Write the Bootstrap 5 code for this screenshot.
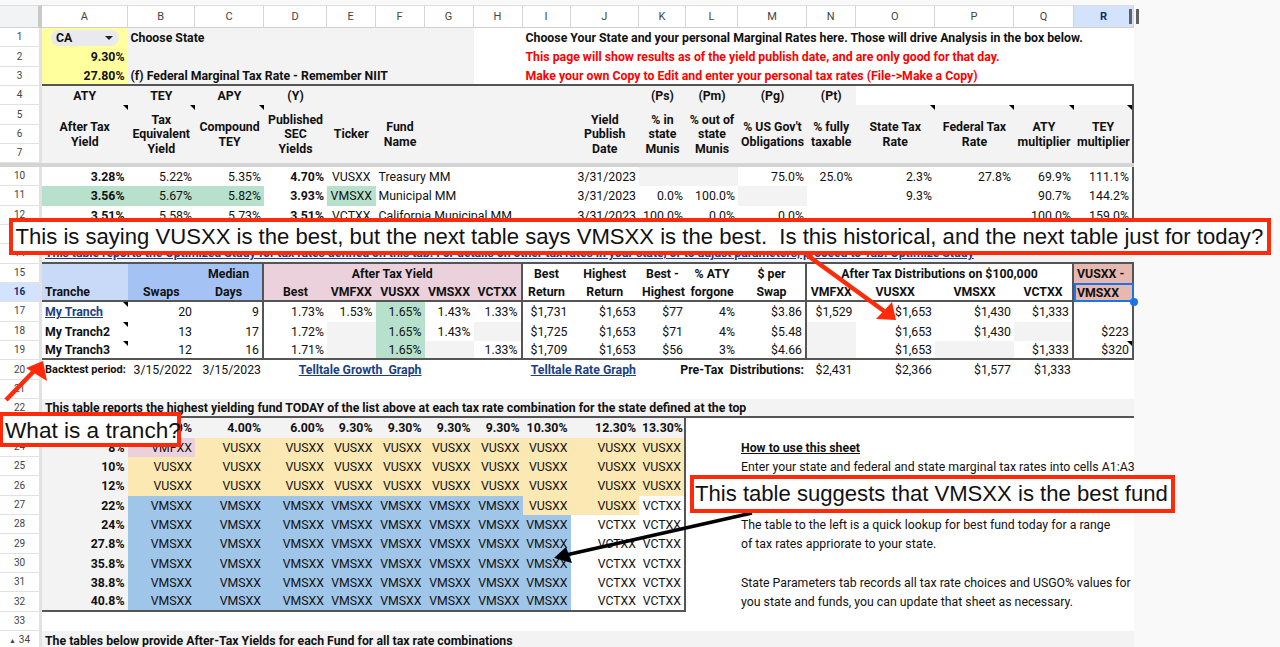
<!DOCTYPE html>
<html lang="en">
<head>
<meta charset="utf-8">
<title>Tax yield sheet</title>
<link href="https://cdn.jsdelivr.net/npm/bootstrap@5.3.0/dist/css/bootstrap.min.css" rel="stylesheet">
<style>
html,body{height:100%;overflow:hidden}
body{background:#f8f9f8;font-family:Roboto,"Liberation Sans",sans-serif;color:#111}
.stage{position:relative;width:1280px;height:647px;overflow:hidden;padding-top:5px}
.sheet{table-layout:fixed;width:1134px;border-collapse:separate;border-spacing:0;font-size:12.3px;line-height:14px;--bs-table-bg:#fff;--bs-table-color:#111}
.sheet>tbody>tr{height:19.35px}
.sheet>tbody>tr>td{padding:.5px 3px 0;white-space:nowrap;overflow:visible;position:relative}
.sheet>tbody>tr.headrow{height:23px}
.sheet>tbody>tr.freeze{height:3.5px}
.sheet>tbody>tr.freeze>td{padding:0;background:#d4d4d4;line-height:0;font-size:0}
.sheet td.rh{background:#fff;color:#444;font-size:10px;text-align:center;padding:0;border-right:3px solid #e2e2e2;border-bottom:1px solid #e2e2e2}
.sheet td.rh-on{background:#d3e3fd;color:#0b2f70;font-weight:700}
.sheet td.ch{color:#444;font-size:11px;text-align:center;border-right:1px solid #d6d6d6;border-bottom:1px solid #d0d0d0;border-top:1px solid #dedede}
.sheet td.corner{background:#f1f3f4;border-right:4px solid #c9c9c9;border-bottom:1px solid #d0d0d0;border-top:1px solid #dedede}
.sheet td.ch-on{background:#d3e3fd;color:#0b2f70;font-weight:700}
.sheet td.c-gray{background:#f3f3f3}
.sheet td.c-yel{background:#ffff9e}
.sheet td.c-grn{background:#b7e1cd}
.sheet td.c-pch{background:#fce8b2}
.sheet td.c-blu{background:#9fc5e8}
.sheet td.c-pnk{background:#ead1dc}
.sheet td.c-lbl{background:#c9daf8}
.sheet td.c-mbl{background:#a4c2f4}
.sheet td.c-sal{background:#e6b8af}
.sheet td.t-red{color:#f00}
.sheet td.k-r{border-right:2px solid #555}
.sheet td.k-b{border-bottom:2px solid #555}
.sheet td.picked{outline:2px solid #1a73e8;outline-offset:-2px}
.sheet td.picked::after{content:"";position:absolute;right:-4px;bottom:-4px;width:8px;height:8px;border-radius:50%;background:#1a73e8;z-index:2}
.sheet td.tri::before{content:"";position:absolute;top:0;right:0;border-style:solid;border-width:0 5px 5px 0;border-color:transparent #000 transparent transparent}
.lh3{line-height:14.7px}
.small-b{font-size:11px}
.lnk{color:#1c3f85;font-weight:700;text-decoration:underline}
.lnk-long{letter-spacing:-.06px}
.chip{background:#e8eaed;width:68px;height:16px;margin-left:6px;padding:0 6px 0 5px;font-weight:700}
.caret-d{width:0;height:0;border-left:4px solid transparent;border-right:4px solid transparent;border-top:4px solid #222}
.grip{position:absolute;top:3px;width:3px;height:15px;background:#5f6368}
.grip-a{left:55px}
.grip-b{left:62px}
.ovl{position:absolute;left:0;top:0;width:1280px;height:647px;pointer-events:none}
.note{position:absolute;background:#fff;border:4px solid #ff2a0a;font-family:"Liberation Sans",Arial,sans-serif;line-height:1;color:#111;white-space:nowrap}
.note-a{left:9px;top:218px;width:1262px;height:37px;font-size:22.1px;padding-left:2.5px;padding-top:1px}
.note-b{left:-1px;top:412px;width:182px;height:35px;font-size:22.6px;padding-left:2px;padding-top:3px}
.note-c{left:690px;top:475px;width:485px;height:38px;font-size:22.1px;padding-left:1px}
.tick{font-size:7px;color:#444;margin-right:3px}
</style>
</head>
<body>
<div class="stage">
<table class="table table-borderless align-middle mb-0 sheet">
<colgroup>
<col style="width:42px"><col style="width:85.5px"><col style="width:67.5px"><col style="width:69px"><col style="width:63px"><col style="width:48.5px"><col style="width:49px"><col style="width:49px"><col style="width:49px"><col style="width:48px"><col style="width:68.5px"><col style="width:47px"><col style="width:52px"><col style="width:69px"><col style="width:48.5px"><col style="width:79.5px"><col style="width:79px"><col style="width:60px"><col style="width:60px">
</colgroup>
<tbody>
<tr class="headrow"><td class="corner"></td><td class="ch">A</td><td class="ch">B</td><td class="ch">C</td><td class="ch">D</td><td class="ch">E</td><td class="ch">F</td><td class="ch">G</td><td class="ch">H</td><td class="ch">I</td><td class="ch">J</td><td class="ch">K</td><td class="ch">L</td><td class="ch">M</td><td class="ch">N</td><td class="ch">O</td><td class="ch">P</td><td class="ch">Q</td><td class="ch ch-on">R<span class="grip grip-a"></span><span class="grip grip-b"></span></td></tr>

<tr><td class="rh">1</td><td class="c-yel"><div class="chip rounded-pill d-flex align-items-center justify-content-between"><span>CA</span><span class="caret-d"></span></div></td><td class="c-gray fw-bold" colspan="6">Choose State</td><td></td><td class="fw-bold" colspan="10">Choose Your State and your personal Marginal Rates here. Those will drive Analysis in the box below.</td></tr>
<tr><td class="rh">2</td><td class="c-yel fw-bold text-end">9.30%</td><td class="c-gray" colspan="6"></td><td></td><td class="fw-bold t-red" colspan="10">This page will show results as of the yield publish date, and are only good for that day.</td></tr>
<tr><td class="rh">3</td><td class="c-yel fw-bold text-end k-b">27.80%</td><td class="c-gray fw-bold k-b" colspan="6">(f) Federal Marginal Tax Rate - Remember NIIT</td><td class="k-b"></td><td class="fw-bold t-red k-b" colspan="10">Make your own Copy to Edit and enter your personal tax rates (File-&gt;Make a Copy)</td></tr>

<tr><td class="rh">4</td><td class="c-gray fw-bold text-center">ATY</td><td class="c-gray fw-bold text-center">TEY</td><td class="c-gray fw-bold text-center">APY</td><td class="c-gray fw-bold text-center">(Y)</td><td class="c-gray"></td><td class="c-gray"></td><td class="c-gray"></td><td class="c-gray"></td><td class="c-gray"></td><td class="c-gray"></td><td class="c-gray fw-bold text-center">(Ps)</td><td class="c-gray fw-bold text-center">(Pm)</td><td class="c-gray fw-bold text-center">(Pg)</td><td class="c-gray fw-bold text-center">(Pt)</td><td></td><td></td><td></td><td class="k-r"></td></tr>
<tr><td class="rh">5</td>
<td rowspan="3" class="c-gray fw-bold text-center lh3 tri">After Tax<br>Yield</td>
<td rowspan="3" class="c-gray fw-bold text-center lh3 tri">Tax<br>Equivalent<br>Yield</td>
<td rowspan="3" class="c-gray fw-bold text-center lh3 tri">Compound<br>TEY</td>
<td rowspan="3" class="c-gray fw-bold text-center lh3">Published<br>SEC<br>Yields</td>
<td rowspan="3" class="c-gray fw-bold text-center lh3">Ticker</td>
<td rowspan="3" class="c-gray fw-bold text-center lh3">Fund<br>Name</td>
<td rowspan="3" class="c-gray"></td><td rowspan="3" class="c-gray"></td><td rowspan="3" class="c-gray"></td>
<td rowspan="3" class="c-gray fw-bold text-center lh3">Yield<br>Publish<br>Date</td>
<td rowspan="3" class="c-gray fw-bold text-center lh3">% in<br>state<br>Munis</td>
<td rowspan="3" class="c-gray fw-bold text-center lh3">% out of<br>state<br>Munis</td>
<td rowspan="3" class="c-gray fw-bold text-center lh3">% US Gov't<br>Obligations</td>
<td rowspan="3" class="c-gray fw-bold text-center lh3">% fully<br>taxable</td>
<td rowspan="3" class="c-gray fw-bold text-center lh3 tri">State Tax<br>Rate</td>
<td rowspan="3" class="c-gray fw-bold text-center lh3 tri">Federal Tax<br>Rate</td>
<td rowspan="3" class="c-gray fw-bold text-center lh3 tri">ATY<br>multiplier</td>
<td rowspan="3" class="c-gray fw-bold text-center lh3 tri k-r">TEY<br>multiplier</td>
</tr>
<tr><td class="rh">6</td></tr>
<tr><td class="rh">7</td></tr>
<tr class="freeze"><td colspan="19"></td></tr>

<tr><td class="rh">10</td><td class="fw-bold text-end">3.28%</td><td class="text-end">5.22%</td><td class="text-end">5.35%</td><td class="fw-bold text-end">4.70%</td><td class="text-center">VUSXX</td><td colspan="4">Treasury MM</td><td class="text-end">3/31/2023</td><td class="c-gray"></td><td class="c-gray"></td><td class="text-end">75.0%</td><td class="text-end">25.0%</td><td class="text-end">2.3%</td><td class="text-end">27.8%</td><td class="text-end">69.9%</td><td class="text-end k-r">111.1%</td></tr>
<tr><td class="rh">11</td><td class="c-grn fw-bold text-end">3.56%</td><td class="c-grn text-end">5.67%</td><td class="c-grn text-end">5.82%</td><td class="fw-bold text-end">3.93%</td><td class="c-grn text-center">VMSXX</td><td colspan="4">Municipal MM</td><td class="text-end">3/31/2023</td><td class="text-end">0.0%</td><td class="text-end">100.0%</td><td class="c-gray"></td><td></td><td class="text-end">9.3%</td><td></td><td class="text-end">90.7%</td><td class="text-end k-r">144.2%</td></tr>
<tr><td class="rh">12</td><td class="fw-bold text-end">3.51%</td><td class="text-end">5.58%</td><td class="text-end">5.73%</td><td class="fw-bold text-end">3.51%</td><td class="text-center">VCTXX</td><td colspan="4">California Municipal MM</td><td class="text-end">3/31/2023</td><td class="text-end">100.0%</td><td class="text-end">0.0%</td><td class="text-end">0.0%</td><td></td><td></td><td></td><td class="text-end">100.0%</td><td class="text-end k-r">159.0%</td></tr>
<tr><td class="rh">13</td><td colspan="18"></td></tr>
<tr><td class="rh">14</td><td class="c-gray k-b" colspan="18"><span class="lnk lnk-long">This table reports the Optimized Study for tax rates defined on this tab. For details on other tax rates in your state, or to adjust parameters, proceed to Tab: Optimize Study</span></td></tr>

<tr><td class="rh">15</td><td class="c-lbl"></td><td class="c-mbl"></td><td class="c-mbl fw-bold text-center k-r">Median</td><td class="c-pnk fw-bold text-center k-r" colspan="5">After Tax Yield</td><td class="fw-bold text-center">Best</td><td class="fw-bold text-center">Highest</td><td class="fw-bold text-center">Best -</td><td class="fw-bold text-center">% ATY</td><td class="fw-bold text-center k-r">$ per</td><td class="fw-bold text-center k-r" colspan="4">After Tax Distributions on $100,000</td><td class="c-sal fw-bold k-r">VUSXX -</td></tr>
<tr><td class="rh rh-on">16</td><td class="c-lbl fw-bold k-b">Tranche</td><td class="c-mbl fw-bold text-center k-b">Swaps</td><td class="c-mbl fw-bold text-center k-b k-r">Days</td><td class="c-pnk fw-bold text-center k-b">Best</td><td class="c-pnk fw-bold text-center k-b">VMFXX</td><td class="c-pnk fw-bold text-center k-b">VUSXX</td><td class="c-pnk fw-bold text-center k-b">VMSXX</td><td class="c-pnk fw-bold text-center k-b k-r">VCTXX</td><td class="fw-bold text-center k-b">Return</td><td class="fw-bold text-center k-b">Return</td><td class="fw-bold text-center k-b">Highest</td><td class="fw-bold text-center k-b">forgone</td><td class="fw-bold text-center k-b k-r">Swap</td><td class="fw-bold text-center k-b">VMFXX</td><td class="fw-bold text-center k-b">VUSXX</td><td class="fw-bold text-center k-b">VMSXX</td><td class="fw-bold text-center k-b k-r">VCTXX</td><td class="c-sal fw-bold picked">VMSXX</td></tr>
<tr><td class="rh">17</td><td class="tri"><span class="lnk">My Tranch</span></td><td class="text-end">20</td><td class="text-end k-r">9</td><td class="text-end">1.73%</td><td class="text-end">1.53%</td><td class="c-grn text-end">1.65%</td><td class="text-end">1.43%</td><td class="text-end k-r">1.33%</td><td class="text-end">$1,731</td><td class="text-end">$1,653</td><td class="text-end">$77</td><td class="text-end">4%</td><td class="text-end k-r">$3.86</td><td class="text-end">$1,529</td><td class="text-end">$1,653</td><td class="text-end">$1,430</td><td class="text-end k-r">$1,333</td><td class="k-r"></td></tr>
<tr><td class="rh">18</td><td class="tri fw-bold">My Tranch2</td><td class="text-end">13</td><td class="text-end k-r">17</td><td class="text-end">1.72%</td><td class="c-gray"></td><td class="c-grn text-end">1.65%</td><td class="text-end">1.43%</td><td class="c-gray k-r"></td><td class="text-end">$1,725</td><td class="text-end">$1,653</td><td class="text-end">$71</td><td class="text-end">4%</td><td class="text-end k-r">$5.48</td><td class="c-gray"></td><td class="text-end">$1,653</td><td class="text-end">$1,430</td><td class="c-gray k-r"></td><td class="text-end k-r">$223</td></tr>
<tr><td class="rh">19</td><td class="tri fw-bold k-b">My Tranch3</td><td class="text-end k-b">12</td><td class="text-end k-b k-r">16</td><td class="text-end k-b">1.71%</td><td class="c-gray k-b"></td><td class="c-grn text-end k-b">1.65%</td><td class="c-gray k-b"></td><td class="text-end k-b k-r">1.33%</td><td class="text-end k-b">$1,709</td><td class="text-end k-b">$1,653</td><td class="text-end k-b">$56</td><td class="text-end k-b">3%</td><td class="text-end k-b k-r">$4.66</td><td class="c-gray k-b"></td><td class="text-end k-b">$1,653</td><td class="c-gray k-b"></td><td class="text-end k-b k-r">$1,333</td><td class="text-end k-b k-r tri">$320</td></tr>
<tr><td class="rh">20</td><td class="fw-bold text-end small-b">Backtest period:</td><td class="text-end">3/15/2022</td><td class="text-end">3/15/2023</td><td class="text-end" colspan="3"><span class="lnk">Telltale Growth&nbsp; Graph</span></td><td></td><td></td><td class="text-end" colspan="2"><span class="lnk">Telltale Rate Graph</span></td><td class="fw-bold text-end" colspan="3">Pre-Tax&nbsp; Distributions:</td><td class="text-end">$2,431</td><td class="text-end">$2,366</td><td class="text-end">$1,577</td><td class="text-end">$1,333</td><td></td></tr>
<tr><td class="rh">21</td><td colspan="18"></td></tr>
<tr><td class="rh">22</td><td class="c-gray fw-bold k-b" colspan="18">This table reports the highest yielding fund TODAY of the list above at each tax rate combination for the state defined at the top</td></tr>

<tr><td class="rh">23</td><td class="c-gray"></td><td class="c-gray fw-bold text-end">2.00%</td><td class="c-gray fw-bold text-end">4.00%</td><td class="c-gray fw-bold text-end">6.00%</td><td class="c-gray fw-bold text-end">9.30%</td><td class="c-gray fw-bold text-end">9.30%</td><td class="c-gray fw-bold text-end">9.30%</td><td class="c-gray fw-bold text-end">9.30%</td><td class="c-gray fw-bold text-end">10.30%</td><td class="c-gray fw-bold text-end">12.30%</td><td class="c-gray fw-bold text-end k-r">13.30%</td><td colspan="7"></td></tr>
<tr><td class="rh">24</td><td class="c-gray fw-bold text-end">8%</td><td class="c-pnk text-end">VMFXX</td><td class="c-pch text-end">VUSXX</td><td class="c-pch text-end">VUSXX</td><td class="c-pch text-end">VUSXX</td><td class="c-pch text-end">VUSXX</td><td class="c-pch text-end">VUSXX</td><td class="c-pch text-end">VUSXX</td><td class="c-pch text-end">VUSXX</td><td class="c-pch text-end">VUSXX</td><td class="c-pch text-end k-r">VUSXX</td><td></td><td colspan="6"><span class="fw-bold text-decoration-underline">How to use this sheet</span></td></tr>
<tr><td class="rh">25</td><td class="c-gray fw-bold text-end">10%</td><td class="c-pch text-end">VUSXX</td><td class="c-pch text-end">VUSXX</td><td class="c-pch text-end">VUSXX</td><td class="c-pch text-end">VUSXX</td><td class="c-pch text-end">VUSXX</td><td class="c-pch text-end">VUSXX</td><td class="c-pch text-end">VUSXX</td><td class="c-pch text-end">VUSXX</td><td class="c-pch text-end">VUSXX</td><td class="c-pch text-end k-r">VUSXX</td><td></td><td colspan="6">Enter your state and federal and state marginal tax rates into cells A1:A3</td></tr>
<tr><td class="rh">26</td><td class="c-gray fw-bold text-end">12%</td><td class="c-pch text-end">VUSXX</td><td class="c-pch text-end">VUSXX</td><td class="c-pch text-end">VUSXX</td><td class="c-pch text-end">VUSXX</td><td class="c-pch text-end">VUSXX</td><td class="c-pch text-end">VUSXX</td><td class="c-pch text-end">VUSXX</td><td class="c-pch text-end">VUSXX</td><td class="c-pch text-end">VUSXX</td><td class="c-pch text-end k-r">VUSXX</td><td colspan="7"></td></tr>
<tr><td class="rh">27</td><td class="c-gray fw-bold text-end">22%</td><td class="c-blu text-end">VMSXX</td><td class="c-blu text-end">VMSXX</td><td class="c-blu text-end">VMSXX</td><td class="c-blu text-end">VMSXX</td><td class="c-blu text-end">VMSXX</td><td class="c-blu text-end">VMSXX</td><td class="c-blu text-end">VMSXX</td><td class="c-pch text-end">VUSXX</td><td class="c-pch text-end">VUSXX</td><td class="text-end k-r">VCTXX</td><td colspan="7"></td></tr>
<tr><td class="rh">28</td><td class="c-gray fw-bold text-end">24%</td><td class="c-blu text-end">VMSXX</td><td class="c-blu text-end">VMSXX</td><td class="c-blu text-end">VMSXX</td><td class="c-blu text-end">VMSXX</td><td class="c-blu text-end">VMSXX</td><td class="c-blu text-end">VMSXX</td><td class="c-blu text-end">VMSXX</td><td class="c-blu text-end">VMSXX</td><td class="text-end">VCTXX</td><td class="text-end k-r">VCTXX</td><td></td><td colspan="6">The table to the left is a quick lookup for best fund today for a range</td></tr>
<tr><td class="rh">29</td><td class="c-gray fw-bold text-end">27.8%</td><td class="c-blu text-end">VMSXX</td><td class="c-blu text-end">VMSXX</td><td class="c-blu text-end">VMSXX</td><td class="c-blu text-end">VMSXX</td><td class="c-blu text-end">VMSXX</td><td class="c-blu text-end">VMSXX</td><td class="c-blu text-end">VMSXX</td><td class="c-blu text-end">VMSXX</td><td class="text-end">VCTXX</td><td class="text-end k-r">VCTXX</td><td></td><td colspan="6">of tax rates appriorate to your state.</td></tr>
<tr><td class="rh">30</td><td class="c-gray fw-bold text-end">35.8%</td><td class="c-blu text-end">VMSXX</td><td class="c-blu text-end">VMSXX</td><td class="c-blu text-end">VMSXX</td><td class="c-blu text-end">VMSXX</td><td class="c-blu text-end">VMSXX</td><td class="c-blu text-end">VMSXX</td><td class="c-blu text-end">VMSXX</td><td class="c-blu text-end">VMSXX</td><td class="text-end">VCTXX</td><td class="text-end k-r">VCTXX</td><td colspan="7"></td></tr>
<tr><td class="rh">31</td><td class="c-gray fw-bold text-end">38.8%</td><td class="c-blu text-end">VMSXX</td><td class="c-blu text-end">VMSXX</td><td class="c-blu text-end">VMSXX</td><td class="c-blu text-end">VMSXX</td><td class="c-blu text-end">VMSXX</td><td class="c-blu text-end">VMSXX</td><td class="c-blu text-end">VMSXX</td><td class="c-blu text-end">VMSXX</td><td class="text-end">VCTXX</td><td class="text-end k-r">VCTXX</td><td></td><td colspan="6">State Parameters tab records all tax rate choices and USGO% values for</td></tr>
<tr><td class="rh">32</td><td class="c-gray fw-bold text-end k-b">40.8%</td><td class="c-blu text-end k-b">VMSXX</td><td class="c-blu text-end k-b">VMSXX</td><td class="c-blu text-end k-b">VMSXX</td><td class="c-blu text-end k-b">VMSXX</td><td class="c-blu text-end k-b">VMSXX</td><td class="c-blu text-end k-b">VMSXX</td><td class="c-blu text-end k-b">VMSXX</td><td class="c-blu text-end k-b">VMSXX</td><td class="text-end k-b">VCTXX</td><td class="text-end k-b k-r">VCTXX</td><td></td><td colspan="6">you state and funds, you can update that sheet as necessary.</td></tr>
<tr><td class="rh">33</td><td colspan="18"></td></tr>
<tr><td class="rh"><span class="tick">▲</span>34</td><td class="c-gray fw-bold" colspan="18">The tables below provide After-Tax Yields for each Fund for all tax rate combinations</td></tr>
</tbody>
</table>

<svg class="ovl" viewBox="0 0 1280 647" aria-hidden="true">
<path d="M807 255 L884 311" stroke="#ff2a0a" stroke-width="4.5" fill="none"/>
<path d="M896 320 L876 319 L892 302 Z" fill="#ff2a0a"/>
<path d="M6 400 L34 371" stroke="#ff2a0a" stroke-width="4.5" fill="none"/>
<path d="M43 361 L47 381 L26 368 Z" fill="#ff2a0a"/>
<path d="M752 513 L566 555" stroke="#000" stroke-width="3.5" fill="none"/>
<path d="M554 558 L572 563 L566 547 Z" fill="#000"/>
</svg>
<div class="note note-a d-flex align-items-center">This is saying VUSXX is the best, but the next table says VMSXX is the best.&nbsp; Is this historical, and the next table just for today?</div>
<div class="note note-b d-flex align-items-center">What is a tranch?</div>
<div class="note note-c d-flex align-items-center">This table suggests that VMSXX is the best fund</div>
</div>
<script src="https://cdn.jsdelivr.net/npm/bootstrap@5.3.0/dist/js/bootstrap.bundle.min.js"></script>
</body>
</html>
